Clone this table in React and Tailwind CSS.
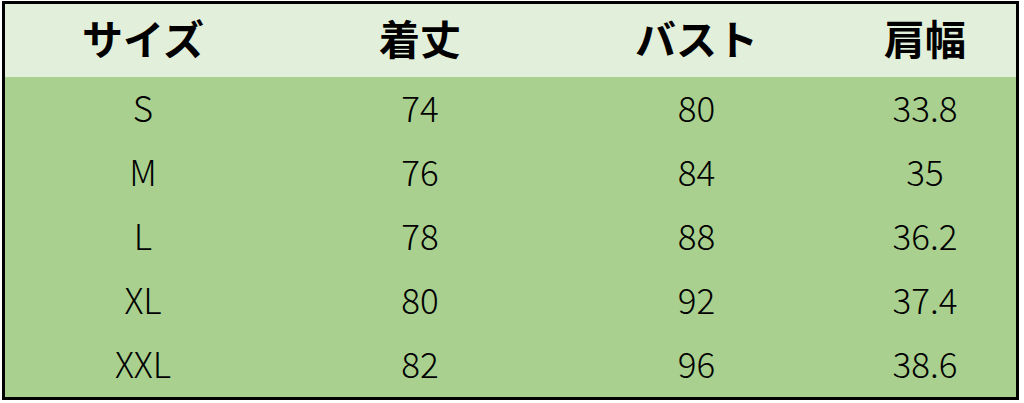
export default function App() {
  const head = ["サイズ", "着丈", "バスト", "肩幅"];
  const rows = [
    ["S", "74", "80", "33.8"],
    ["M", "76", "84", "35"],
    ["L", "78", "88", "36.2"],
    ["XL", "80", "92", "37.4"],
    ["XXL", "82", "96", "38.6"],
  ];
  const font = { fontFamily: '"Noto Sans CJK JP", "Noto Sans", sans-serif' };
  return (
    <div className="w-[1024px] h-[403px] bg-white pt-px pl-[2px]" style={font}>
      <div className="w-[1017px] border-[3px] border-black">
        <div className="grid grid-cols-[276px_278px_275px_1fr] h-[73px] bg-[#e2efda]">
          {head.map((h) => (
            <div key={h} className="flex items-center justify-center pb-[6px] text-[41px] font-bold text-black leading-none">
              {h}
            </div>
          ))}
        </div>
        <div className="bg-[#a9d08e]">
          {rows.map((r, i) => (
            <div key={i} className="grid grid-cols-[276px_278px_275px_1fr] h-[64px]">
              {r.map((c, j) => (
                <div key={j} className="flex items-center justify-center pb-[6px] text-[35px] font-light text-black leading-none">
                  {c}
                </div>
              ))}
            </div>
          ))}
        </div>
      </div>
    </div>
  );
}
